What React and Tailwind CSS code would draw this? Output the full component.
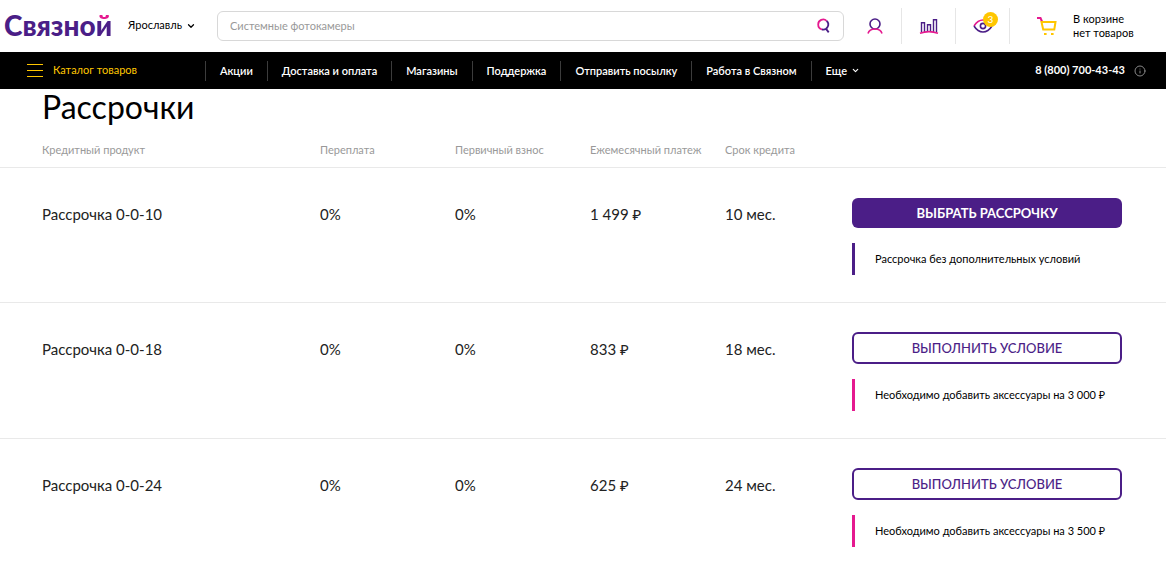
import { ChevronDown, Info } from 'lucide-react';

const navLinks = [
    'Акции',
    'Доставка и оплата',
    'Магазины',
    'Поддержка',
    'Отправить посылку',
    'Работа в Связном',
];

const columns = ['Кредитный продукт', 'Переплата', 'Первичный взнос', 'Ежемесячный платеж', 'Срок кредита'];

const plans = [
    { name: 'Рассрочка 0-0-10', overpay: '0%', first: '0%', monthly: '1 499 ₽', term: '10 мес.', available: true, note: 'Рассрочка без дополнительных условий' },
    { name: 'Рассрочка 0-0-18', overpay: '0%', first: '0%', monthly: '833 ₽', term: '18 мес.', available: false, note: 'Необходимо добавить аксессуары на 3 000 ₽' },
    { name: 'Рассрочка 0-0-24', overpay: '0%', first: '0%', monthly: '625 ₽', term: '24 мес.', available: false, note: 'Необходимо добавить аксессуары на 3 500 ₽' },
];

function SearchIcon() {
    return (
        <svg width="14" height="16" viewBox="0 0 14 16" fill="none" strokeWidth="1.8">
            <path d="M5 11.500C2.500 10.800 1.200 8.900 1.200 6.500a5 5 0 0 1 8.400-3.700" stroke="#e5198f" />
            <path d="M9.600 2.800A5.100 5.100 0 0 1 5 11.500M8.700 10.400l3 4" stroke="#4b1e87" />
        </svg>
    );
}

function UserIcon() {
    return (
        <svg width="16" height="16" viewBox="0 0 16 16" fill="none" strokeWidth="1.6">
            <circle cx="8" cy="6" r="5" stroke="#4b1e87" />
            <path d="M1 15.5c1-3.400 3.500-4.500 7-4.500s6 1.100 7 4.500" stroke="#e5198f" />
        </svg>
    );
}

function CompareIcon() {
    return (
        <svg width="20" height="16" viewBox="0 0 20 16" fill="none" strokeWidth="1.4">
            <path d="M2.500 14V4.700h3V14M8.500 13V6.700h3V13M14.500 14V1.700h3V14" stroke="#4b1e87" />
            <path d="M1 15.200c5.500-1.900 12.500-1.900 18 0" stroke="#e5198f" strokeWidth="1.600" />
        </svg>
    );
}

function EyeIcon() {
    return (
        <svg width="20" height="14" viewBox="0 0 20 14" fill="none" strokeWidth="1.6">
            <path d="M1 7c5-8 13-8 18 0" stroke="#e5198f" />
            <path d="M1 7c5 8 13 8 18 0" stroke="#4b1e87" />
            <circle cx="10" cy="7" r="2.600" stroke="#4b1e87" />
        </svg>
    );
}

function CartIcon() {
    return (
        <svg width="20" height="20" viewBox="0 0 20 20" fill="none" strokeWidth="2">
            <path d="M0 2h3.500l1.500 3.500" stroke="#e5198f" />
            <path d="M4.500 6H18.500L17.300 13.500H6.200Z" stroke="#ffc600" />
            <path d="M7 18h2.600M14 18h2.600" stroke="#ffc600" strokeWidth="2.200" />
        </svg>
    );
}

function Header() {
    return (
        <header className="flex h-[52px] items-center">
            <a href="#" className="w-[128px] pb-[2px] pl-1 text-[28px] leading-8 font-black text-[#4b1e87]">
                Связно<span className="bg-[linear-gradient(#e5198f_11px,#4b1e87_11px)] bg-clip-text text-transparent">й</span>
            </a>
            <button type="button" className="flex w-[89px] items-center gap-1 pb-px text-[11px]">
                Ярославль <ChevronDown size={10} strokeWidth={3} />
            </button>
            <form className="flex h-[30px] flex-1 items-center rounded-md border border-[#d8d8d8] px-3">
                <input
                    type="search"
                    aria-label="Поиск"
                    placeholder="Системные фотокамеры"
                    className="min-w-0 flex-1 text-[11px] outline-none placeholder:text-[#999]"
                />
                <button type="button" aria-label="Найти"><SearchIcon /></button>
            </form>
            <div className="ml-1 flex h-9 items-center divide-x divide-[#e6e6e6]">
                <a href="#" aria-label="Профиль" className="flex h-full w-[54px] items-center justify-center"><UserIcon /></a>
                <a href="#" aria-label="Сравнение" className="flex h-full w-[54px] items-center justify-center"><CompareIcon /></a>
                <a href="#" aria-label="Просмотренные" className="relative flex h-full w-[54px] items-center justify-center">
                    <EyeIcon />
                    <span className="absolute top-1 right-[11px] flex size-[15px] items-center justify-center rounded-full bg-[#ffc600] text-[10px] text-white">3</span>
                </a>
                <a href="#" className="flex h-full w-[156px] items-center gap-4 pl-[27px] text-[11px] leading-[14px]">
                    <CartIcon />
                    <span>В корзине<br />нет товаров</span>
                </a>
            </div>
        </header>
    );
}

function Navigation() {
    return (
        <nav className="flex h-[37px] items-center bg-black text-[11px] font-semibold text-white">
            <button type="button" className="flex w-[205px] items-center gap-[10px] pl-[27px] font-normal text-[#ffc600]">
                <svg width="16" height="13" viewBox="0 0 16 13" fill="#ffc600">
                    <path d="M0 0h16v1H0zM0 6h16v1H0zM0 12h16v1H0z" />
                </svg>
                Каталог товаров
            </button>
            {navLinks.map(link => (
                <a key={link} href="#" className="border-l border-[#3c3c3c] px-[14px] leading-5 whitespace-nowrap">{link}</a>
            ))}
            <button type="button" className="flex items-center gap-1 border-l border-[#3c3c3c] px-[14px] leading-5">
                Еще <ChevronDown size={9} strokeWidth={3} />
            </button>
            <a href="tel:88007004343" className="ml-auto font-bold whitespace-nowrap">8 (800) 700-43-43</a>
            <button type="button" aria-label="Информация" className="mr-5 ml-[9px] text-[#888]"><Info size={12} /></button>
        </nav>
    );
}

function PlanRow({ plan, last }) {
    return (
        <tr className={last ? 'align-top' : 'border-b border-[#e9e9e9] align-top'}>
            <td className="pt-9 pl-[42px]">{plan.name}</td>
            <td className="pt-9">{plan.overpay}</td>
            <td className="pt-9">{plan.first}</td>
            <td className="pt-9">{plan.monthly}</td>
            <td className="pt-9">{plan.term}</td>
            <td className={last ? 'pt-[29px] pr-11' : 'pt-[29px] pr-11 pb-[27px]'}>
                {plan.available ? (
                    <button type="button" className="my-px block h-[30px] w-full rounded-md bg-[#4b1e87] text-[13px] font-bold text-white uppercase">
                        Выбрать рассрочку
                    </button>
                ) : (
                    <button type="button" className="block h-8 w-full rounded-md border-2 border-[#4b1e87] text-[13px] font-medium text-[#4b1e87] uppercase">
                        Выполнить условие
                    </button>
                )}
                <p className={`mt-[15px] border-l-3 pl-5 text-[11px] leading-8 text-black ${plan.available ? 'border-[#4b1e87]' : 'border-[#e5198f]'}`}>
                    {plan.note}
                </p>
            </td>
        </tr>
    );
}

export default function App() {
    return (
        <div className="bg-white font-['Lato','Noto_Sans',sans-serif] text-black">
            <Header />
            <Navigation />
            <main>
                <h1 className="pl-[42px] text-[32px] leading-9">Рассрочки</h1>
                <table className="mt-2 w-full table-fixed border-collapse text-left text-[15px] leading-5 text-[#222]">
                    <colgroup>
                        <col className="w-[320px]" />
                        <col className="w-[135px]" />
                        <col className="w-[135px]" />
                        <col className="w-[135px]" />
                        <col className="w-[127px]" />
                        <col />
                    </colgroup>
                    <thead>
                        <tr className="h-[34px] border-b border-[#e9e9e9] text-[11px] text-[#999]">
                            {columns.map(name => (
                                <th key={name} scope="col" className="font-normal whitespace-nowrap first:pl-[42px]">{name}</th>
                            ))}
                            <td />
                        </tr>
                    </thead>
                    <tbody>
                        {plans.map((plan, i) => (
                            <PlanRow key={plan.name} plan={plan} last={i === plans.length - 1} />
                        ))}
                    </tbody>
                </table>
            </main>
        </div>
    );
}
